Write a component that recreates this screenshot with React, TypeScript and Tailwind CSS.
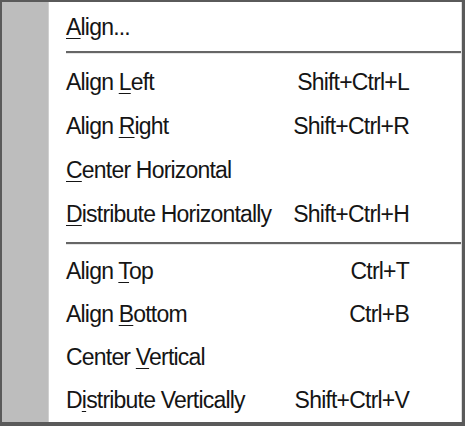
import React from "react";

type Item = {
  before: string;
  key: string;
  after: string;
  shortcut?: string;
};

const groups: Item[][] = [
  [{ before: "", key: "A", after: "lign..." }],
  [
    { before: "Align ", key: "L", after: "eft", shortcut: "Shift+Ctrl+L" },
    { before: "Align ", key: "R", after: "ight", shortcut: "Shift+Ctrl+R" },
    { before: "", key: "C", after: "enter Horizontal" },
    { before: "", key: "D", after: "istribute Horizontally", shortcut: "Shift+Ctrl+H" },
  ],
  [
    { before: "Align ", key: "T", after: "op", shortcut: "Ctrl+T" },
    { before: "Align ", key: "B", after: "ottom", shortcut: "Ctrl+B" },
    { before: "Center ", key: "V", after: "ertical" },
    { before: "D", key: "i", after: "stribute Vertically", shortcut: "Shift+Ctrl+V" },
  ],
];

function MenuRow({ item, h }: { item: Item; h: string }) {
  return (
    <div className={`flex items-center justify-between pl-[17px] pr-[52px] ${h}`}>
      <span>
        {item.before}
        <span className="underline decoration-1 underline-offset-[3px]">{item.key}</span>
        {item.after}
      </span>
      {item.shortcut && <span>{item.shortcut}</span>}
    </div>
  );
}

function Separator({ className }: { className: string }) {
  return (
    <div className={className}>
      <div className="ml-[17px] border-t-2 border-[#666] border-b border-b-[#e6e6e6]" />
    </div>
  );
}

export default function App() {
  return (
    <div
      className="flex h-[426px] w-[465px] border-t-2 border-l-2 border-r-[3px] border-b-[4px] border-[#5a5a5a] bg-white text-[23px] tracking-[-0.8px] text-[#151515]"
      style={{ fontFamily: '"Liberation Sans", Arial, sans-serif' }}
    >
      <div className="w-[47px] shrink-0 border-r border-[#d0d0d0] bg-[#bdbdbd]" />
      <div className="flex flex-1 flex-col border-r border-[#dcdcdc] pt-[3px]">
        <MenuRow item={groups[0][0]} h="h-[44px]" />
        <Separator className="pt-[2px] pb-[6px]" />
        {groups[1].map((item) => (
          <MenuRow key={item.key + item.after} item={item} h="h-[44px]" />
        ))}
        <Separator className="pt-[6px] pb-[5px]" />
        {groups[2].map((item) => (
          <MenuRow key={item.key + item.after} item={item} h="h-[43px]" />
        ))}
      </div>
    </div>
  );
}
